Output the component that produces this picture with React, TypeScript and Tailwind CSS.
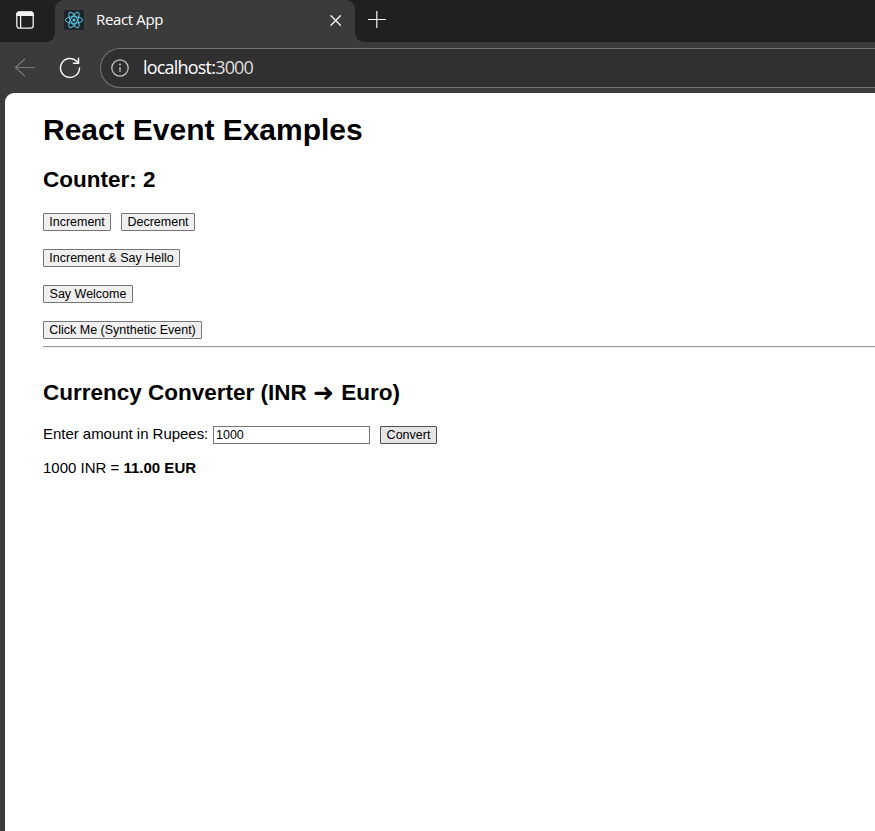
import { useState } from "react";
import type { ReactNode } from "react";

const ARIAL = "font-['Liberation_Sans',Arial,sans-serif]";
const SEGOE = "font-['Open_Sans','Noto_Sans',sans-serif]";

function ReactLogo() {
  return (
    <svg width="20" height="20" viewBox="0 0 20 20" fill="none" stroke="#58c4dc" strokeWidth="1">
      <rect width="20" height="20" rx="1.5" fill="#20232a" stroke="none" />
      <ellipse cx="10" cy="10" rx="8.6" ry="3.3" />
      <ellipse cx="10" cy="10" rx="8.6" ry="3.3" transform="rotate(60 10 10)" />
      <ellipse cx="10" cy="10" rx="8.6" ry="3.3" transform="rotate(120 10 10)" />
      <circle cx="10" cy="10" r="1.6" fill="#58c4dc" stroke="none" />
    </svg>
  );
}

function TabStrip() {
  return (
    <div className={`flex h-[42px] bg-[#3b3b3b] text-white ${SEGOE}`}>
      <div className="flex w-[55px] bg-[#3b3b3b]">
        <div className="h-[42px] w-[55px] rounded-br-[9px] bg-[#202020] pt-[11px] pl-4">
          <svg width="18" height="18" viewBox="0 0 18 18" fill="none" stroke="#f3f3f3" strokeWidth="1.3">
            <rect x="0.8" y="0.8" width="16.4" height="16.4" rx="2.6" />
            <path d="M.5 3.200A2.700 2.700 0 0 1 3.200.500h11.600a2.700 2.700 0 0 1 2.700 2.700V5H.500z" fill="#f3f3f3" stroke="none" />
            <path d="M4.6 5v12" />
          </svg>
        </div>
      </div>
      <div className="flex w-[300px] bg-[#202020]">
        <div className="flex h-[42px] w-[300px] items-start rounded-t-[9px] bg-[#3b3b3b] pt-[10px] pl-[9px]">
          <ReactLogo />
          <span className="ml-3 w-[234px] text-[15px] leading-[18px] tracking-[-0.35px] whitespace-nowrap">React App</span>
          <svg className="mt-[5px]" width="11" height="11" viewBox="0 0 11 11" stroke="#f3f3f3" strokeWidth="1.4" strokeLinecap="round">
            <path d="M1 .800l9.400 9.400M10.400.800 1 10.200" />
          </svg>
        </div>
      </div>
      <div className="h-[42px] flex-1 rounded-bl-[9px] bg-[#202020] pt-[11px] pl-[13px]">
        <svg width="18" height="18" viewBox="0 0 18 18" stroke="#f3f3f3" strokeWidth="1.2">
          <path d="M0 8.5h18M8.8 0v17" />
        </svg>
      </div>
    </div>
  );
}

function Toolbar() {
  return (
    <div className={`flex h-[51px] bg-[#3b3b3b] pt-[6px] pl-[14px] ${SEGOE}`}>
      <svg className="mt-[10px] shrink-0" width="22" height="20" viewBox="0 0 22 20" fill="none" stroke="#777" strokeWidth="1.2">
        <path d="M21 9.5H1.5M11 .7 1.5 9.5l9.500 8.800" />
      </svg>
      <svg className="mt-[9px] ml-[23px] shrink-0" width="22" height="22" viewBox="0 0 22 22" fill="none" stroke="#f3f3f3" strokeWidth="1.5" strokeLinecap="round">
        <path d="M20.500 11A9.500 9.500 0 1 1 17.800 4.300L19.200 5.800M19.500 1.200v5h-5" />
      </svg>
      <div className="ml-[19px] flex h-10 flex-1 items-center rounded-l-full border border-r-0 border-[#747474] bg-[#303030] pl-[10px]">
        <svg width="18" height="18" viewBox="0 0 18 18" fill="none" stroke="#c7c7c7" strokeWidth="1.2">
          <circle cx="9" cy="9" r="8.2" />
          <path d="M9 8v5" />
          <circle cx="9" cy="5.500" r=".9" fill="#c7c7c7" stroke="none" />
        </svg>
        <span className="ml-[14px] pb-[2px] text-[18px] leading-6 tracking-[-0.8px] text-white">
          localhost:<span className="text-[#dedede]">3000</span>
        </span>
      </div>
    </div>
  );
}

function Button({ children, width, onClick, hovered }: { children: ReactNode; width: string; onClick?: () => void; hovered?: boolean }) {
  return (
    <button
      onClick={onClick}
      className={`block h-[18px] rounded-[1px] border text-center text-[12.5px] leading-[15px] whitespace-nowrap text-black ${width} ${
        hovered ? "border-[#4f4f4f] bg-[#e5e5e5]" : "border-[#767676] bg-[#efefef]"
      }`}
    >
      {children}
    </button>
  );
}

export default function App() {
  const [count, setCount] = useState(2);
  const [amount, setAmount] = useState("1000");
  const [converted, setConverted] = useState("1000");

  return (
    <div className="flex h-[831px] w-[875px] flex-col overflow-hidden bg-[#3b3b3b]">
      <TabStrip />
      <Toolbar />
      <main className={`ml-[5px] flex-1 rounded-tl-[9px] bg-white pt-[20px] pl-[38px] text-[15px] text-black ${ARIAL}`}>
        <h1 className="text-[30px] leading-[34px] font-bold tracking-[-0.03px]">React Event Examples</h1>
        <h2 className="mt-5 text-[22.5px] leading-[26px] font-bold">Counter: {count}</h2>
        <div className="mt-5 flex gap-[10px]">
          <Button width="w-[68px]" onClick={() => setCount(count + 1)}>Increment</Button>
          <Button width="w-[74px]" onClick={() => setCount(count - 1)}>Decrement</Button>
        </div>
        <div className="mt-[18px] flex flex-col gap-[18px]">
          <Button width="w-[137px]" onClick={() => setCount(count + 1)}>Increment &amp; Say Hello</Button>
          <Button width="w-[90px]">Say Welcome</Button>
          <Button width="w-[159px]">Click Me (Synthetic Event)</Button>
        </div>
        <hr className="mt-[7px] h-[2px] border-0 border-t border-b border-t-[#9a9a9a] border-b-[#eeeeee]" />
        <h2 className="mt-8 flex h-[26px] items-center text-[22.5px] leading-[26px] font-bold whitespace-pre">
          <span>Currency Converter (INR </span>
          <span className="w-[22px] font-['DejaVu_Sans'] text-[25px]">➜</span>
          <span> Euro)</span>
        </h2>
        <div className="mt-5 flex h-[18px]">
          <label htmlFor="amount" className="w-[170px] leading-4 tracking-[-0.03px] whitespace-nowrap">Enter amount in Rupees:</label>
          <input
            id="amount"
            value={amount}
            onChange={(e) => setAmount(e.target.value)}
            className="h-[18px] w-[157px] border border-[#767676] bg-white px-[2px] pb-px text-[12.5px] leading-[15px]"
          />
          <div className="ml-[10px]">
            <Button width="w-[57px]" hovered onClick={() => setConverted(amount)}>Convert</Button>
          </div>
        </div>
        <p className="mt-[15px] leading-[18px]">
          {converted} INR = <strong className="font-bold">{(Number(converted) * 0.011).toFixed(2)} EUR</strong>
        </p>
      </main>
    </div>
  );
}
